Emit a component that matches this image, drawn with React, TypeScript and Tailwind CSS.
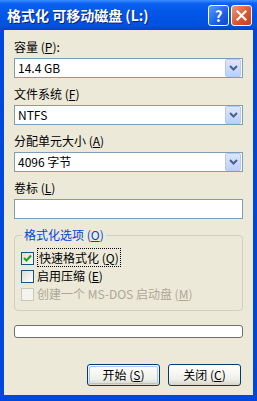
import React from "react";

const font = { fontFamily: '"Noto Sans CJK SC", "Noto Sans", sans-serif' };

function Chevron() {
  return (
    <svg width="9" height="6" viewBox="0 0 9 6">
      <path d="M1 1 L4.5 4.5 L8 1" fill="none" stroke="#4D6185" strokeWidth="2" />
    </svg>
  );
}

function Combo({ children }: { children: React.ReactNode }) {
  return (
    <div className="h-[20px] w-full border border-[#7F9DB9] bg-white flex items-center">
      <div className="flex-1 pl-[3px] text-[12px] leading-[14px] text-black">{children}</div>
      <div className="w-[16px] h-[18px] mr-px rounded-[2px] border border-[#B6C9F5] bg-[linear-gradient(to_bottom,#DCE6FD,#BCCFFA)] flex items-center justify-center">
        <Chevron />
      </div>
    </div>
  );
}

function Label({ t, k, after }: { t: string; k: string; after?: string }) {
  return (
    <div className="h-[14px] text-[12px] leading-[14px] text-black whitespace-nowrap">
      {t} (<u>{k}</u>){after}
    </div>
  );
}

function Check({ checked, disabled, children }: { checked?: boolean; disabled?: boolean; children: React.ReactNode }) {
  return (
    <div className="h-[18px] flex items-center">
      <div
        className={
          "w-[13px] h-[13px] border flex items-center justify-center " +
          (disabled
            ? "border-[#CAC8BB] bg-[#F4F3EE]"
            : checked
            ? "border-[#1C5180] bg-[linear-gradient(135deg,#E2E2C8,#F8F8EE)]"
            : "border-[#1C5180] bg-[linear-gradient(135deg,#DCDCD7,#FFFFFF)]")
        }
      >
        {checked && (
          <svg width="9" height="9" viewBox="0 0 9 9">
            <path d="M1 4 L3.5 6.5 L8 1.5" fill="none" stroke="#21A121" strokeWidth="2" />
          </svg>
        )}
      </div>
      <div className={"ml-[3px] text-[12px] leading-[14px] whitespace-nowrap " + (disabled ? "text-[#ACA899]" : "text-black")}>
        {children}
      </div>
    </div>
  );
}

export default function App() {
  return (
    <div style={font} className="w-[257px] h-[401px] flex flex-col bg-[#0047DC] overflow-hidden">
      {/* Title bar */}
      <div className="h-[30px] shrink-0 flex items-center pl-[7px] pr-[5px] bg-[linear-gradient(to_bottom,#3C8FFF_0%,#0B60F2_12%,#0055E5_50%,#0052E0_85%,#0046C8_100%)]">
        <div className="flex-1 text-white font-bold text-[14px] leading-[16px] whitespace-nowrap [text-shadow:1px_1px_#0A1E8A]">
          格式化 可移动磁盘 (L:)
        </div>
        <div className="w-[21px] h-[21px] rounded-[3px] border border-white bg-[linear-gradient(135deg,#5B9BFF,#1A5FEA_60%,#1049C8)] flex items-center justify-center text-white font-bold text-[15px] leading-none mr-[2px]">
          ?
        </div>
        <div className="w-[21px] h-[21px] rounded-[3px] border border-white bg-[linear-gradient(135deg,#EE9A7C,#DD5530_55%,#C4401D)] flex items-center justify-center">
          <svg width="11" height="11" viewBox="0 0 11 11">
            <path d="M1.5 1.5 L9.5 9.5 M9.5 1.5 L1.5 9.5" stroke="white" strokeWidth="2.2" strokeLinecap="square" />
          </svg>
        </div>
      </div>

      {/* Body */}
      <div className="flex-1 mx-[4px] mb-[6px] bg-[#ECE9D8] px-[10px] pt-[10px] flex flex-col">
        <Label t="容量" k="P" after=":" />
        <div className="mt-[4px]">
          <Combo>14.4 GB</Combo>
        </div>

        <div className="mt-[9px]">
          <Label t="文件系统" k="F" />
        </div>
        <div className="mt-[4px]">
          <Combo>NTFS</Combo>
        </div>

        <div className="mt-[9px]">
          <Label t="分配单元大小" k="A" />
        </div>
        <div className="mt-[4px]">
          <Combo>4096 字节</Combo>
        </div>

        <div className="mt-[9px]">
          <Label t="卷标" k="L" />
        </div>
        <div className="mt-[4px] h-[20px] border border-[#7F9DB9] bg-white" />

        <fieldset className="mt-[9px] border border-[#D0D0BF] rounded-[4px] pl-[6px] pb-[7px]">
          <legend className="ml-[1px] px-[2px] text-[12px] leading-[14px] text-[#0046D5] whitespace-nowrap">
            格式化选项 (<u>O</u>)
          </legend>
          <div className="pt-[7px] flex flex-col">
            <Check checked>
              <span className="border border-dotted border-black px-px">快速格式化 (<u>Q</u>)</span>
            </Check>
            <Check>
              启用压缩 (<u>E</u>)
            </Check>
            <Check disabled>
              创建一个 MS-DOS 启动盘 (<u>M</u>)
            </Check>
          </div>
        </fieldset>

        <div className="mt-[14px] h-[13px] border border-[#6F6F6F] rounded-[3px] bg-white" />

        <div className="mt-[26px] flex justify-end gap-[8px] pr-[2px]">
          <div className="w-[73px] h-[22px] rounded-[3px] border border-[#003C74] bg-[linear-gradient(to_bottom,#FFFFFF,#F0F0EA_70%,#D8D5C8)] p-px">
            <div className="w-full h-full rounded-[2px] border border-[#A8C4F4] flex items-center justify-center text-[12px] leading-[14px] text-black">
              开始 (<u>S</u>)
            </div>
          </div>
          <div className="w-[73px] h-[22px] rounded-[3px] border border-[#003C74] bg-[linear-gradient(to_bottom,#FFFFFF,#F0F0EA_70%,#D8D5C8)] flex items-center justify-center text-[12px] leading-[14px] text-black">
            关闭 (<u>C</u>)
          </div>
        </div>
      </div>
    </div>
  );
}
